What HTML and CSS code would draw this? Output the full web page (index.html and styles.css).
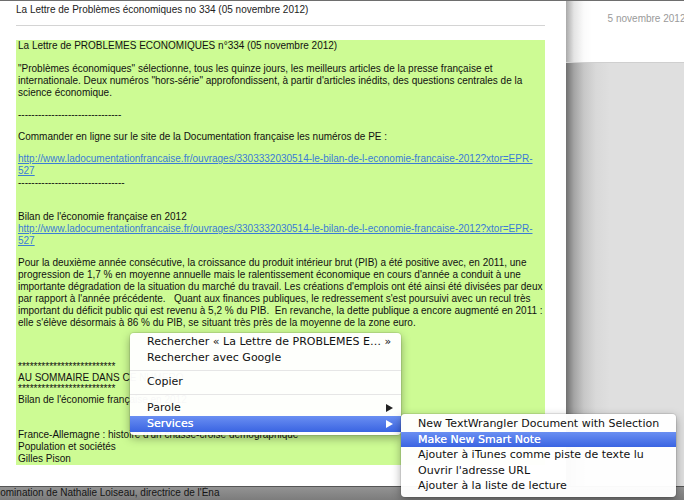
FILE: index.html
```html
<html><head>
    <title>La Lettre de Problèmes économiques</title>
    <link rel="stylesheet" href="styles.css">
</head>
<body>
    <div class="screen">
        <div class="main">
            <div class="reader">
                <div class="subject">La Lettre de Problèmes économiques no 334 (05 novembre 2012)</div>
                <div class="rule"></div>
                <div class="mail">
                    <p>La Lettre de PROBLEMES ECONOMIQUES n°334 (05 novembre 2012)</p>
                    <p>"Problèmes économiques" sélectionne, tous les quinze jours, les meilleurs articles de la presse française et<br>
                    internationale. Deux numéros "hors-série" approfondissent, à partir d'articles inédits, des questions centrales de la<br>
                    science économique.</p>
                    <p>-------------------------------</p>
                    <p>Commander en ligne sur le site de la Documentation française les numéros de PE :</p>
                    <p><a href="#">http://www.ladocumentationfrancaise.fr/ouvrages/3303332030514-le-bilan-de-l-economie-francaise-2012?xtor=EPR-<br>527</a><br>
                    --------------------------------<br>&nbsp;</p>
                    <p>Bilan de l'économie française en 2012<br>
                    <a href="#">http://www.ladocumentationfrancaise.fr/ouvrages/3303332030514-le-bilan-de-l-economie-francaise-2012?xtor=EPR-<br>527</a></p>
                    <p>Pour la deuxième année consécutive, la croissance du produit intérieur brut (PIB) a été positive avec, en 2011, une<br>
                    progression de 1,7 % en moyenne annuelle mais le ralentissement économique en cours d'année a conduit à une<br>
                    importante dégradation de la situation du marché du travail. Les créations d'emplois ont été ainsi été divisées par deux<br>
                    par rapport à l'année précédente. &nbsp; Quant aux finances publiques, le redressement s'est poursuivi avec un recul très<br>
                    important du déficit public qui est revenu à 5,2 % du PIB. &nbsp;En revanche, la dette publique a encore augmenté en 2011 :<br>
                    elle s'élève désormais à 86 % du PIB, se situant très près de la moyenne de la zone euro.</p>
                    <p class="summary">*************************<br>
                    AU SOMMAIRE DANS CE NUMERO<br>
                    *************************<br>
                    Bilan de l'économie française en 2012</p>
                    <p class="after-blank">France-Allemagne : histoire d'un chassé-croisé démographique<br>
                    Population et sociétés<br>
                    Gilles Pison</p>
                </div>
            </div>
            <div class="side">
                <div class="side-head">5 novembre 2012</div>
                <div class="side-body"></div>
            </div>
        </div>
        <div class="statusbar"><span>Nomination de Nathalie Loiseau, directrice de l'Éna</span></div>

        <ul class="menu context-menu">
            <li>Rechercher « La Lettre de PROBLEMES E… »</li>
            <li>Rechercher avec Google</li>
            <li class="sep"></li>
            <li>Copier</li>
            <li class="sep wide"></li>
            <li class="has-sub">Parole</li>
            <li class="has-sub active">Services</li>
        </ul>
        <ul class="menu services-menu">
            <li>New TextWrangler Document with Selection</li>
            <li class="active">Make New Smart Note</li>
            <li>Ajouter à iTunes comme piste de texte lu</li>
            <li>Ouvrir l'adresse URL</li>
            <li>Ajouter à la liste de lecture</li>
        </ul>
    </div>
</body></html>
```

FILE: styles.css
```css
body {
    margin: 0;
    padding: 0;
    font-family: "Liberation Sans", Arial, sans-serif;
    color: #1e1e1e;
}

.screen {
    position: relative;
    width: 684px;
    height: 500px;
    overflow: hidden;
    display: flex;
    flex-direction: column;
    border-top: 1px solid #6e6e6e;
    box-sizing: border-box;
}

.main {
    flex: 1;
    display: flex;
    overflow: hidden;
}

.reader {
    width: 569px;
    padding: 3px 21px 0 16px;
    box-sizing: border-box;
    background: #fff;
}

.subject {
    font-size: 10px;
    line-height: 12px;
    color: #222;
}

.rule {
    height: 1px;
    background: #d4d4d4;
    margin: 9px 0 14px;
}

.mail {
    background: #cdfb94;
    padding: 0 2px;
    font-size: 10px;
    line-height: 12px;
    white-space: nowrap;
    color: #111;
}

.mail p {
    margin: 0 0 10px;
}

.mail p:first-child {
    margin-bottom: 11px;
}

.mail a {
    color: #3b7cd6;
}

.mail .summary {
    line-height: 11px;
    margin-top: 32px;
}

.mail .after-blank {
    margin-top: 24px;
}

.side {
    flex: 1;
    display: flex;
    flex-direction: column;
}

.side-head {
    height: 62px;
    padding: 12px 0 0 42px;
    box-sizing: border-box;
    font-size: 10px;
    line-height: 12px;
    color: #9a9a9a;
    white-space: nowrap;
    background: linear-gradient(to right, #a9a9a9 0, #e4e4e4 8px, #fbfbfb 18px, #fff 26px);
    border-bottom: 1px solid #cfcfcf;
}

.side-body {
    flex: 1;
    background: linear-gradient(to right, #707070 0, #a4a4a4 8px, #c7c7c7 18px, #d9d9d9 30px, #dfdfdf 44px);
}

.statusbar {
    height: 13px;
    background: linear-gradient(#939393, #7c7c7c);
    border-top: 1px solid #555;
    font-size: 10px;
    line-height: 12px;
    color: #151515;
    white-space: nowrap;
    overflow: hidden;
}

.statusbar span {
    margin-left: -7px;
}

/* menus */
.menu {
    position: absolute;
    margin: 0;
    list-style: none;
    background: rgba(255, 255, 255, 0.97);
    border-radius: 4px;
    box-shadow: 0 3px 10px rgba(0, 0, 0, 0.35), 0 0 0 1px rgba(0, 0, 0, 0.08);
    font-family: "DejaVu Sans", "Lucida Grande", sans-serif;
    font-size: 11px;
    color: #111;
    white-space: nowrap;
}

.menu li {
    position: relative;
    height: 16px;
    line-height: 16px;
    padding: 0 17px;
}

.menu li.sep {
    height: 8px;
}

.menu li.sep::before {
    content: "";
    position: absolute;
    left: 0;
    right: 0;
    top: 4px;
    height: 1px;
    background: #e6e6e6;
}

.menu li.sep.wide {
    height: 10px;
}

.menu li.active {
    background: linear-gradient(#6a8ff2, #3a64e2);
    color: #fff;
    text-shadow: 0 0 0.6px #fff;
}

.menu li.has-sub::after {
    content: "";
    position: absolute;
    right: 8px;
    top: 4px;
    border-style: solid;
    border-width: 4px 0 4px 7px;
    border-color: transparent transparent transparent #222;
}

.menu li.has-sub.active::after {
    border-left-color: #fff;
}

.context-menu {
    left: 130px;
    top: 332px;
    width: 271px;
    padding: 1px 0 3px;
    box-sizing: border-box;
}

.services-menu {
    left: 401px;
    top: 413px;
    width: 275px;
    padding: 2px 0 3px;
    box-sizing: border-box;
}

.services-menu li {
    height: 15.5px;
    line-height: 15.5px;
}
```
